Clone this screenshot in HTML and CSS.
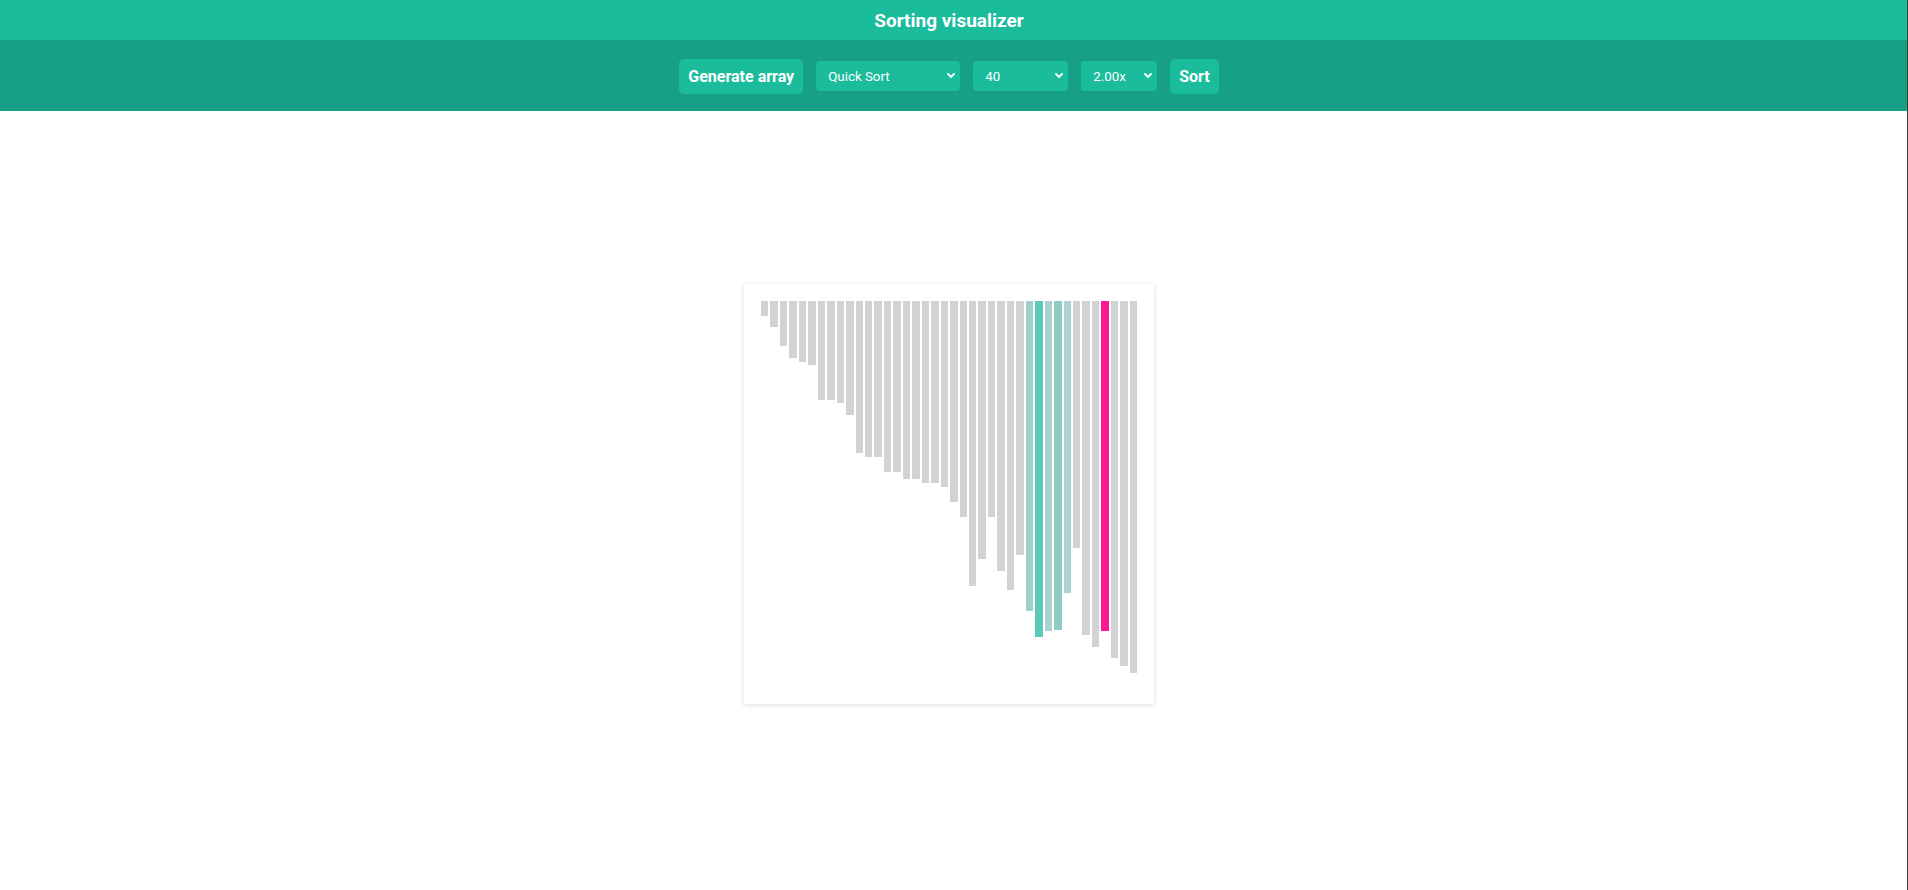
FILE: index.html
```html
<!DOCTYPE html>
<html lang="en">
<head>
<meta charset="utf-8">
<title>Sorting visualizer</title>
<link rel="stylesheet" href="styles.css">
</head>
<body>
<header class="header">
  <div class="title-bar"><h1 class="title">Sorting visualizer</h1></div>
  <div class="controls">
    <button class="btn btn-generate">Generate array</button>
    <span class="select-wrap sel-algo">
      <select class="select"><option>Quick Sort</option><option>Merge Sort</option><option>Bubble Sort</option><option>Insertion Sort</option></select>
      <svg class="chev" width="8" height="5" viewBox="0 0 8 5"><polyline points="1,1 4,4 7,1" fill="none" stroke="#fff" stroke-width="1.8" stroke-linecap="round" stroke-linejoin="round"/></svg>
    </span>
    <span class="select-wrap sel-size">
      <select class="select"><option>40</option><option>20</option><option>60</option></select>
      <svg class="chev" width="8" height="5" viewBox="0 0 8 5"><polyline points="1,1 4,4 7,1" fill="none" stroke="#fff" stroke-width="1.8" stroke-linecap="round" stroke-linejoin="round"/></svg>
    </span>
    <span class="select-wrap sel-speed">
      <select class="select"><option>2.00x</option><option>1.00x</option><option>0.50x</option></select>
      <svg class="chev" width="8" height="5" viewBox="0 0 8 5"><polyline points="1,1 4,4 7,1" fill="none" stroke="#fff" stroke-width="1.8" stroke-linecap="round" stroke-linejoin="round"/></svg>
    </span>
    <button class="btn btn-sort">Sort</button>
  </div>
</header>
<main class="main">
  <div class="card">
    <div class="bars">
      <div class="bar" style="height:15px"></div>
      <div class="bar" style="height:26px"></div>
      <div class="bar" style="height:45px"></div>
      <div class="bar" style="height:57px"></div>
      <div class="bar" style="height:61px"></div>
      <div class="bar" style="height:64px"></div>
      <div class="bar" style="height:99px"></div>
      <div class="bar" style="height:99px"></div>
      <div class="bar" style="height:102px"></div>
      <div class="bar" style="height:114px"></div>
      <div class="bar" style="height:152px"></div>
      <div class="bar" style="height:156px"></div>
      <div class="bar" style="height:156px"></div>
      <div class="bar" style="height:171px"></div>
      <div class="bar" style="height:171px"></div>
      <div class="bar" style="height:178px"></div>
      <div class="bar" style="height:178px"></div>
      <div class="bar" style="height:182px"></div>
      <div class="bar" style="height:182px"></div>
      <div class="bar" style="height:186px"></div>
      <div class="bar" style="height:201px"></div>
      <div class="bar" style="height:216px"></div>
      <div class="bar" style="height:285px"></div>
      <div class="bar" style="height:258px"></div>
      <div class="bar" style="height:216px"></div>
      <div class="bar" style="height:270px"></div>
      <div class="bar" style="height:289px"></div>
      <div class="bar" style="height:254px"></div>
      <div class="bar bar-t1" style="height:310px"></div>
      <div class="bar bar-t2" style="height:336px"></div>
      <div class="bar bar-t3" style="height:330px"></div>
      <div class="bar bar-t4" style="height:329px"></div>
      <div class="bar bar-t3" style="height:292px"></div>
      <div class="bar" style="height:247px"></div>
      <div class="bar" style="height:334px"></div>
      <div class="bar" style="height:346px"></div>
      <div class="bar bar-pivot" style="height:330px"></div>
      <div class="bar" style="height:357px"></div>
      <div class="bar" style="height:365px"></div>
      <div class="bar" style="height:372px"></div>
    </div>
  </div>
</main>
</body>
</html>
```

FILE: styles.css
```css
html, body {
  margin: 0;
  padding: 0;
}
body {
  background: #ffffff;
  font-family: Roboto, "Liberation Sans", Arial, sans-serif;
  border-right: 1px solid #3c3c3c;
  min-height: 890px;
  box-sizing: border-box;
}
.header {
  display: flex;
  flex-direction: column;
}
.title-bar {
  background: #1abc9c;
  height: 40px;
  display: flex;
  align-items: center;
  justify-content: center;
  padding-right: 9px;
}
.title {
  margin: 0;
  color: #ffffff;
  font-size: 19px;
  font-weight: 700;
  line-height: 22px;
  padding-top: 1px;
}
.controls {
  background: #16a085;
  height: 71px;
  display: flex;
  align-items: center;
  justify-content: center;
  gap: 13px;
  padding-right: 9px;
  padding-top: 1px;
  box-sizing: border-box;
}
.btn {
  background: #1abc9c;
  color: #ffffff;
  border: none;
  border-radius: 5px;
  font-family: Roboto, "Liberation Sans", Arial, sans-serif;
  font-size: 16px;
  font-weight: 700;
  height: 35px;
  padding: 0 9px;
  margin: 0;
  white-space: nowrap;
  cursor: pointer;
}
.select-wrap {
  position: relative;
  display: block;
  height: 30px;
}
.sel-algo { width: 144px; }
.sel-size { width: 95px; }
.sel-speed { width: 76px; }
.select {
  appearance: none;
  -webkit-appearance: none;
  width: 100%;
  height: 30px;
  margin: 0;
  border: none;
  border-radius: 4px;
  background: #1abc9c;
  color: #ffffff;
  font-family: Roboto, "Liberation Sans", Arial, sans-serif;
  font-size: 13.333px;
  padding: 0 20px 0 12px;
  outline: none;
}
.chev {
  position: absolute;
  right: 5px;
  top: 12px;
  pointer-events: none;
}
.main {
  display: flex;
  justify-content: center;
  padding-top: 173px;
  padding-right: 9px;
}
.card {
  width: 410px;
  height: 420px;
  box-sizing: border-box;
  padding: 17px;
  background: #ffffff;
  box-shadow: 0 1px 5px rgba(0, 0, 0, 0.14);
}
.bars {
  display: flex;
  align-items: flex-start;
  gap: 2px;
  width: 376px;
  height: 386px;
}
.bar {
  flex: 1 1 0;
  background: #d3d3d3;
}
.bar-t1 { background: #a0cfc8; }
.bar-t2 { background: #5ec8b8; }
.bar-t3 { background: #a9d3ce; }
.bar-t4 { background: #8fcdc3; }
.bar-pivot { background: #ff1493; }
```
